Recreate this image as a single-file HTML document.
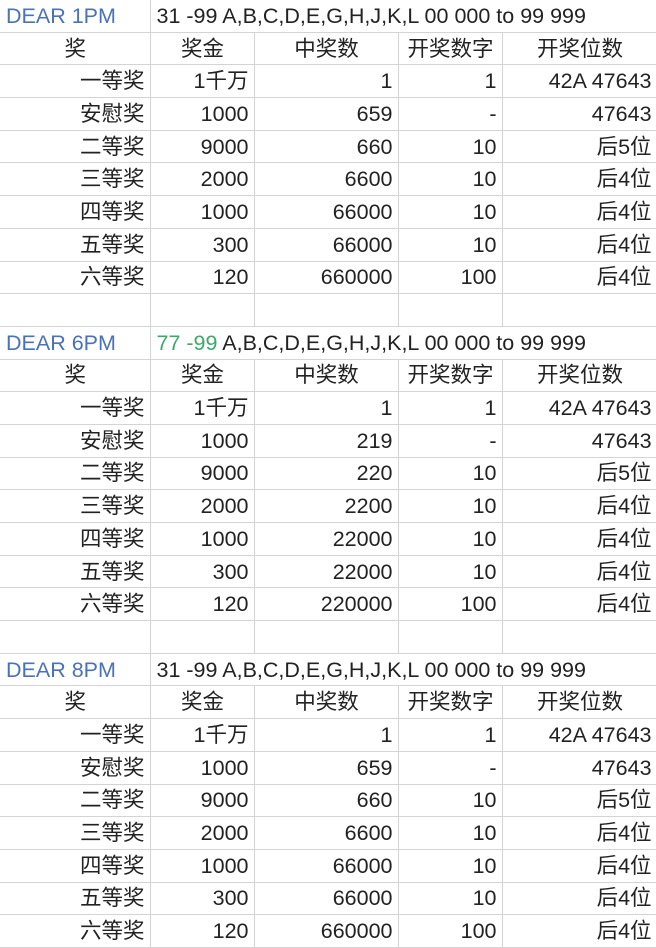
<!DOCTYPE html>
<html><head><meta charset="utf-8"><style>
body{margin:0;background:#fff;width:656px;height:948px;overflow:hidden}
table{border-collapse:collapse;table-layout:fixed;width:657px;font-family:"Liberation Sans","Noto Sans CJK SC",sans-serif;font-size:21.5px;color:#222}
td{border:1px solid #d4d4d4;height:31.69px;padding:0 5px 0 6px;text-align:right;white-space:nowrap;overflow:visible;line-height:30px}
tr.h td{text-align:center}
tr.t td{text-align:left}
.b{color:#4a72b8;border-right:1px solid #d4d4d4}
.g{color:#3daa6a}
table tr:first-child td{border-top:none}
td:first-child{border-left:none}
</style></head><body>
<table>
<colgroup><col style="width:150px"><col style="width:104px"><col style="width:144px"><col style="width:104px"><col style="width:155px"></colgroup>
<tr class="t"><td class="b">DEAR 1PM</td><td colspan="4">31 -99 A,B,C,D,E,G,H,J,K,L 00 000 to 99 999</td></tr>
<tr class="h"><td>奖</td><td>奖金</td><td>中奖数</td><td>开奖数字</td><td>开奖位数</td></tr>
<tr><td>一等奖</td><td>1千万</td><td>1</td><td>1</td><td>42A 47643</td></tr>
<tr><td>安慰奖</td><td>1000</td><td>659</td><td>-</td><td>47643</td></tr>
<tr><td>二等奖</td><td>9000</td><td>660</td><td>10</td><td>后5位</td></tr>
<tr><td>三等奖</td><td>2000</td><td>6600</td><td>10</td><td>后4位</td></tr>
<tr><td>四等奖</td><td>1000</td><td>66000</td><td>10</td><td>后4位</td></tr>
<tr><td>五等奖</td><td>300</td><td>66000</td><td>10</td><td>后4位</td></tr>
<tr><td>六等奖</td><td>120</td><td>660000</td><td>100</td><td>后4位</td></tr>
<tr><td></td><td></td><td></td><td></td><td></td></tr>
<tr class="t"><td class="b">DEAR 6PM</td><td colspan="4"><span class="g">77 -99</span> A,B,C,D,E,G,H,J,K,L 00 000 to 99 999</td></tr>
<tr class="h"><td>奖</td><td>奖金</td><td>中奖数</td><td>开奖数字</td><td>开奖位数</td></tr>
<tr><td>一等奖</td><td>1千万</td><td>1</td><td>1</td><td>42A 47643</td></tr>
<tr><td>安慰奖</td><td>1000</td><td>219</td><td>-</td><td>47643</td></tr>
<tr><td>二等奖</td><td>9000</td><td>220</td><td>10</td><td>后5位</td></tr>
<tr><td>三等奖</td><td>2000</td><td>2200</td><td>10</td><td>后4位</td></tr>
<tr><td>四等奖</td><td>1000</td><td>22000</td><td>10</td><td>后4位</td></tr>
<tr><td>五等奖</td><td>300</td><td>22000</td><td>10</td><td>后4位</td></tr>
<tr><td>六等奖</td><td>120</td><td>220000</td><td>100</td><td>后4位</td></tr>
<tr><td></td><td></td><td></td><td></td><td></td></tr>
<tr class="t"><td class="b">DEAR 8PM</td><td colspan="4">31 -99 A,B,C,D,E,G,H,J,K,L 00 000 to 99 999</td></tr>
<tr class="h"><td>奖</td><td>奖金</td><td>中奖数</td><td>开奖数字</td><td>开奖位数</td></tr>
<tr><td>一等奖</td><td>1千万</td><td>1</td><td>1</td><td>42A 47643</td></tr>
<tr><td>安慰奖</td><td>1000</td><td>659</td><td>-</td><td>47643</td></tr>
<tr><td>二等奖</td><td>9000</td><td>660</td><td>10</td><td>后5位</td></tr>
<tr><td>三等奖</td><td>2000</td><td>6600</td><td>10</td><td>后4位</td></tr>
<tr><td>四等奖</td><td>1000</td><td>66000</td><td>10</td><td>后4位</td></tr>
<tr><td>五等奖</td><td>300</td><td>66000</td><td>10</td><td>后4位</td></tr>
<tr><td>六等奖</td><td>120</td><td>660000</td><td>100</td><td>后4位</td></tr>
</table>
</body></html>
